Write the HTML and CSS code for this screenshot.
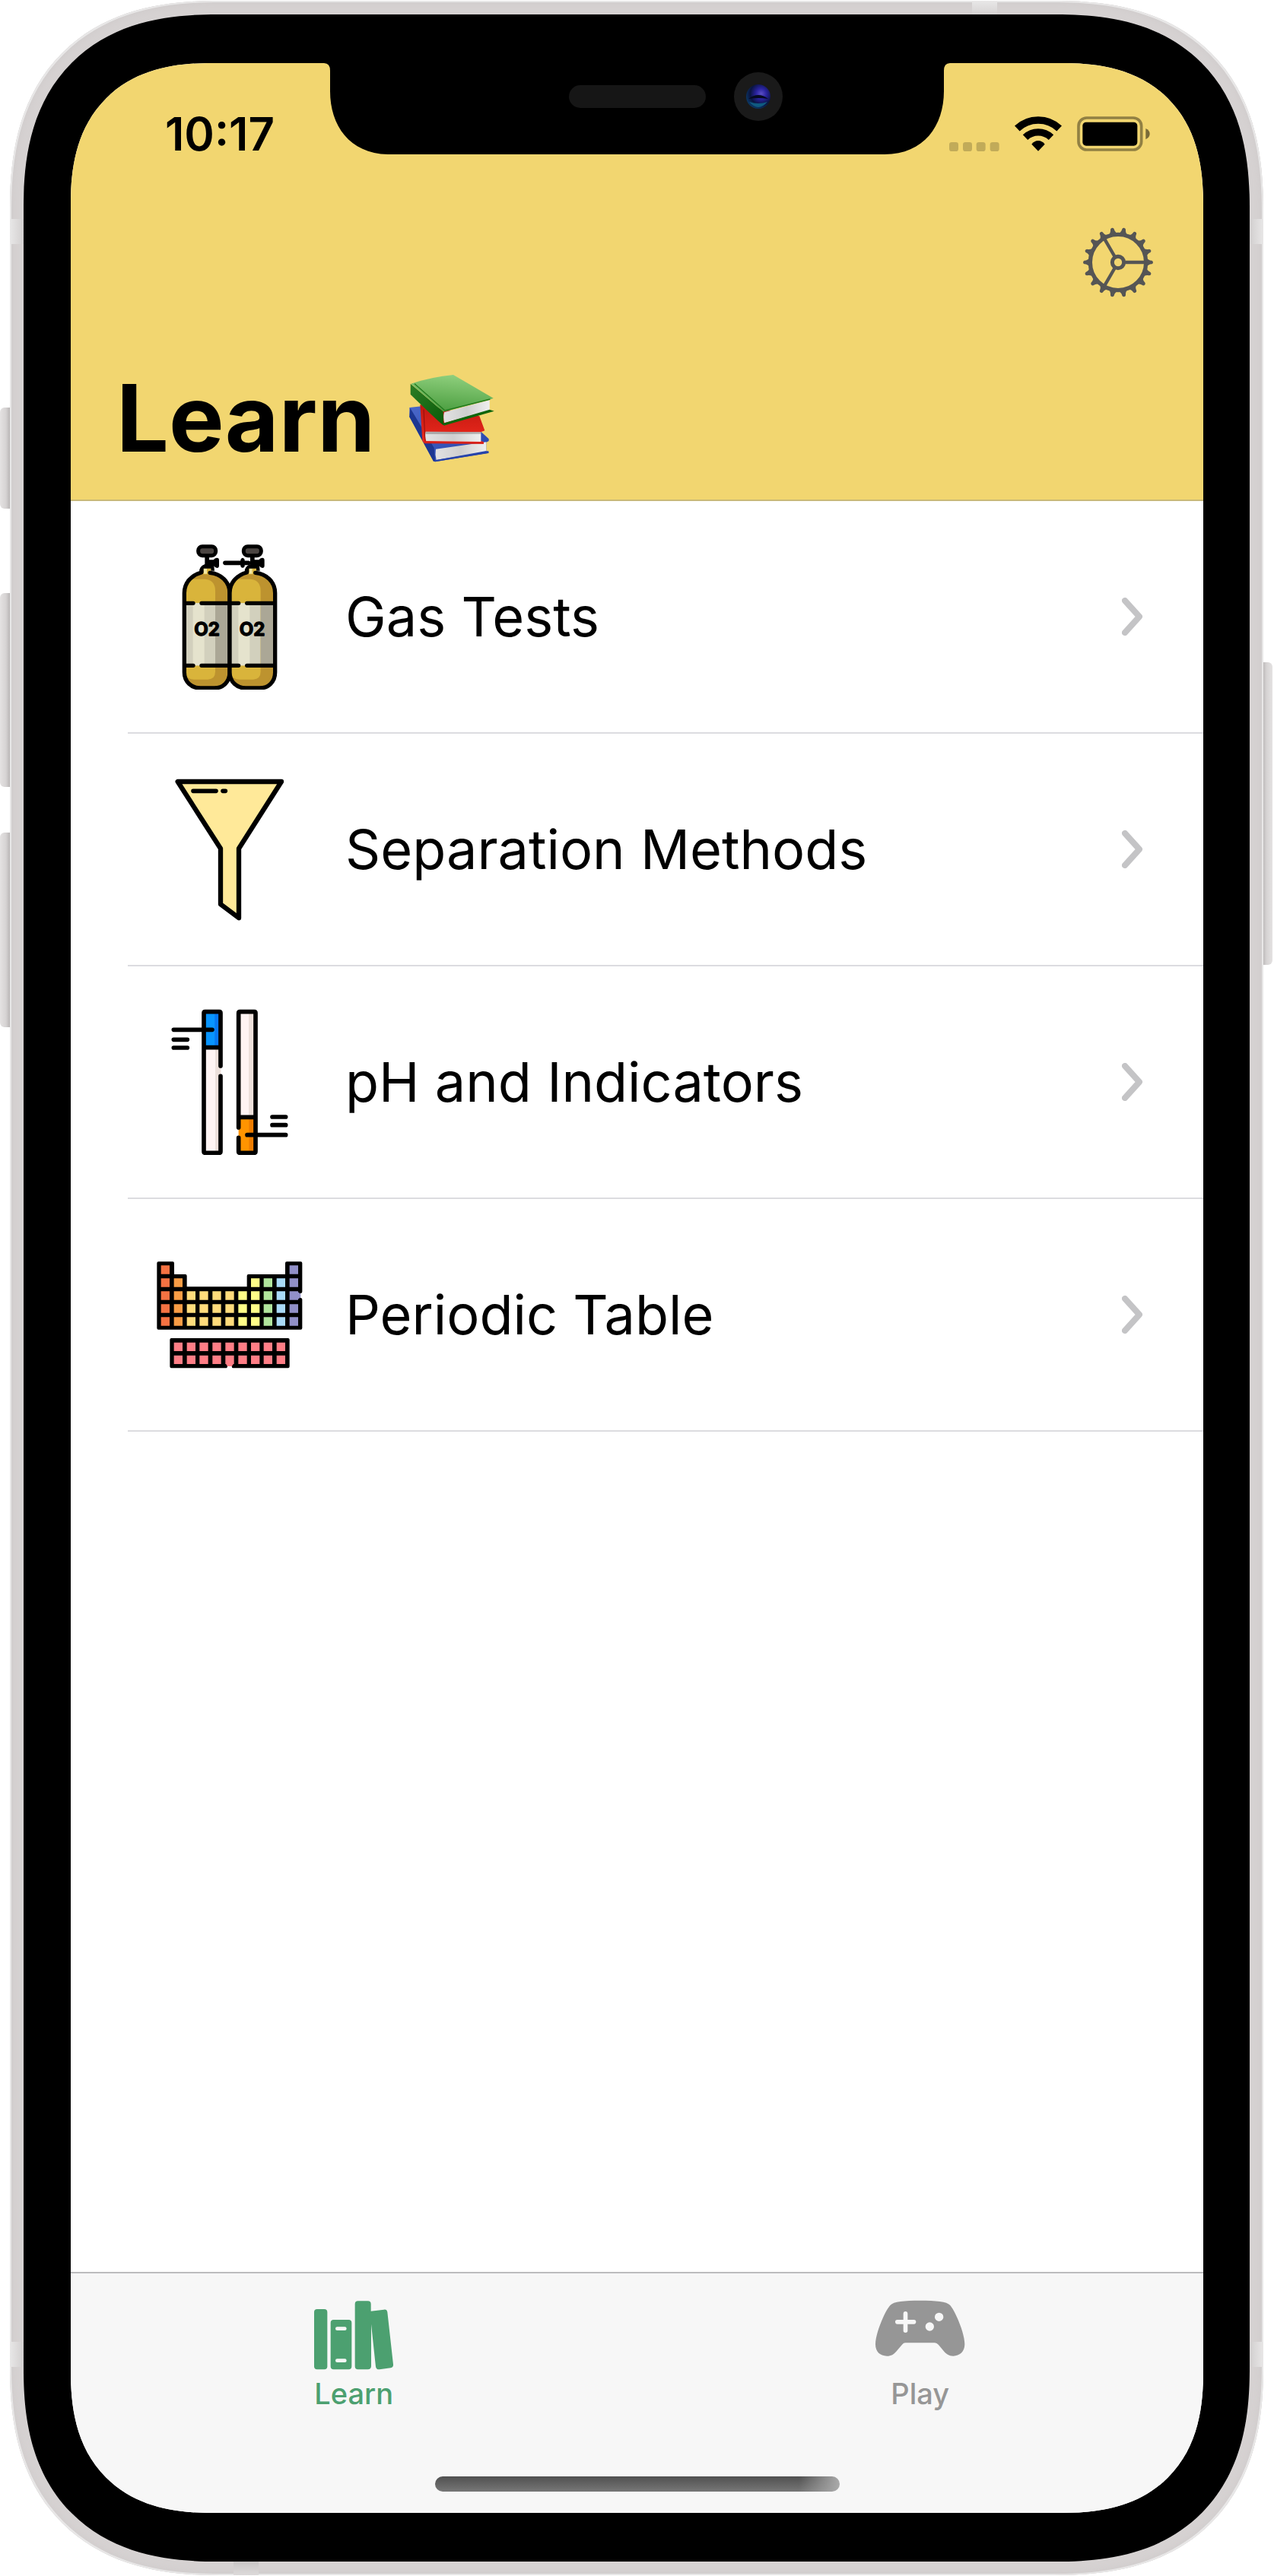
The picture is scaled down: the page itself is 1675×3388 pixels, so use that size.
FILE: index.html
```html
<!DOCTYPE html>
<html lang="en">
<head>
<meta charset="utf-8">
<meta name="viewport" content="width=device-width, initial-scale=1">
<title>Learn</title>
<link rel="stylesheet" href="styles.css">
</head>
<body>
<div class="phone">
  <span class="key key-mute"></span>
  <span class="key key-up"></span>
  <span class="key key-down"></span>
  <span class="key key-power"></span>
  <div class="frame">
    <span class="band band-side band-left band-high"></span>
    <span class="band band-side band-left band-low"></span>
    <span class="band band-side band-right band-high"></span>
    <span class="band band-side band-right band-low"></span>
    <span class="band band-edge band-top"></span>
    <span class="band band-edge band-bottom"></span>
    <div class="bezel">
      <div class="screen">
        <svg class="notch" viewBox="426 83 823 120" aria-hidden="true">
          <defs>
            <radialGradient id="lens" cx="62%" cy="38%" r="70%">
              <stop offset="0" stop-color="#5a4fc4"/>
              <stop offset=".3" stop-color="#2a23a0"/>
              <stop offset=".65" stop-color="#0a1440"/>
              <stop offset="1" stop-color="#0b3f6c"/>
            </radialGradient>
          </defs>
          <path d="M426 82H1249V83Q1241 83 1241 93V120C1241 165 1215 203 1163 203H512C460 203 434 165 434 120V93Q434 83 426 83Z"/>
          <rect x="748" y="112" width="180" height="30" rx="15" fill="#161616"/>
          <circle cx="997" cy="127" r="32" fill="#1a1a1a"/>
          <circle cx="997" cy="127" r="16" fill="url(#lens)"/>
          <path d="M984 130Q997 120 1010 130Q997 128 984 130Z" fill="#050a20"/>
          <path d="M985 134Q997 148 1009 134Q997 138 985 134Z" fill="#0f5a80"/>
        </svg>

        <header class="header">
          <div class="status">
            <time class="clock">10:17</time>
            <div class="indicators">
              <svg class="signal" viewBox="81 135 198 36" aria-label="No signal">
                <g opacity=".2"><rect x="81" y="135" width="36" height="36" rx="10"/><rect x="135" y="135" width="36" height="36" rx="10"/><rect x="188" y="135" width="36" height="36" rx="10"/><rect x="242" y="135" width="36" height="36" rx="10"/></g>
              </svg>
              <svg class="wifi" viewBox="340 33 186 138" aria-label="Wi-Fi">
                <g fill="none" stroke="#000"><path stroke-width="29" d="M350 81A121 121 0 0 1 516 81"/><path stroke-width="28" d="M382 116A74 74 0 0 1 484 116"/></g>
                <path d="M433 170L407 143Q418 129 433 129T459 143Z"/>
              </svg>
              <svg class="battery" viewBox="590 36 288 138" aria-label="Battery full">
                <rect x="596" y="42" width="248" height="126" rx="32" fill="none" stroke="#000" stroke-width="11" opacity=".4"/>
                <rect x="612" y="59" width="216" height="93" rx="14"/>
                <path d="M861 84Q877 91 877 105T861 127Z" opacity=".5"/>
              </svg>
            </div>
          </div>
          <div class="navbar">
            <button class="settings" type="button" aria-label="Settings">
              <svg viewBox="612 477 276 276" fill="none" stroke="#555">
                <defs><path id="teeth" fill="#555" stroke="none" d="M862 596Q869 607 883 608Q888 610 888 615T883 622Q869 623 862 634ZM638 596Q631 607 617 608Q612 610 612 615T617 622Q631 623 638 634Z"/></defs>
                <circle cx="750" cy="615" r="110" stroke-width="16"/>
                <circle cx="750" cy="615" r="23" stroke-width="15"/>
                <path stroke-width="13" d="M778 615H860M736 591L695 520M736 639L695 710"/>
                <use href="#teeth"/>
                <use href="#teeth" transform="rotate(20 750 615)"/>
                <use href="#teeth" transform="rotate(40 750 615)"/>
                <use href="#teeth" transform="rotate(60 750 615)"/>
                <use href="#teeth" transform="rotate(80 750 615)"/>
                <use href="#teeth" transform="rotate(100 750 615)"/>
                <use href="#teeth" transform="rotate(120 750 615)"/>
                <use href="#teeth" transform="rotate(140 750 615)"/>
                <use href="#teeth" transform="rotate(160 750 615)"/>
              </svg>
            </button>
          </div>
          <h1 class="title">Learn
            <svg class="books" viewBox="108 92 342 351" role="img" aria-label="Books">
              <defs>
                <linearGradient id="green" x1=".6" y1="0" x2=".4" y2="1"><stop offset="0" stop-color="#90d07e"/><stop offset="1" stop-color="#4b9e40"/></linearGradient>
                <linearGradient id="spine" x1="0" y1="0" x2="1" y2="1"><stop offset="0" stop-color="#2c7d25"/><stop offset="1" stop-color="#0a5a08"/></linearGradient>
                <linearGradient id="red" x1="0" y1="0" x2="0" y2="1"><stop offset="0" stop-color="#c01810"/><stop offset="1" stop-color="#ee2a1e"/></linearGradient>
                <linearGradient id="pages" x1="0" y1="0" x2="1" y2="0"><stop offset="0" stop-color="#e2e2e2"/><stop offset=".5" stop-color="#cfcfcf"/><stop offset="1" stop-color="#efefef"/></linearGradient>
                <linearGradient id="blue" x1="0" y1="0" x2="1" y2="1"><stop offset="0" stop-color="#4a67c8"/><stop offset="1" stop-color="#2444ab"/></linearGradient>
              </defs>
              <path fill="url(#blue)" d="M112 224L160 219L395 320L425 348V356L415 361V396L424 396V404L214 438L207 436L112 261Z"/>
              <path fill="url(#pages)" d="M216 388L415 360V395L218 431Q212 410 216 388Z"/>
              <path fill="#1d3791" d="M112 261L207 436L213 434L209 383L115 226Z"/>
              <path fill="none" stroke="#2743a8" stroke-width="6" d="M212 435L424 400"/>
              <path fill="url(#red)" d="M154 212L388 258L409 315L393 321V355L405 360V367L170 364L163 355Z"/>
              <path fill="url(#pages)" d="M176 319L394 321V359L178 356Q171 338 176 319Z"/>
              <path fill="#777" opacity=".5" d="M176 319L394 321V328L176 329Z"/>
              <path fill="none" stroke="#8f0f0b" stroke-width="3" d="M168 232L174 358"/>
              <path fill="none" stroke="#d3211a" stroke-width="7" d="M170 362L404 364"/>
              <path fill="url(#spine)" d="M116 130L245 240L247 294Q240 293 116 172Z"/>
              <path fill="url(#green)" d="M118 130Q200 103 285 95L443 187L425 194L252 240L245 240Z"/>
              <path fill="url(#pages)" d="M249 243L428 195V235L250 285Q244 263 249 243Z"/>
              <path fill="#0d650b" d="M428 232L446 238L248 295L245 286Z"/>
              <path fill="none" stroke="#237a1d" stroke-width="4" d="M132 130L252 236L430 191"/>
            </svg>
          </h1>
        </header>

        <main class="content">
          <ul class="topics">
            <li><a class="topic" href="#gas-tests">
              <svg class="topic-icon" viewBox="78 75 576 576" aria-hidden="true">
                <defs>
                  <clipPath id="tankclip"><path d="M187 270C187 220 220 195 250 188H300C330 195 366 220 366 270V583Q360 645 300 645H245Q190 640 187 583Z"/></clipPath>
                  <g id="tank">
                    <g clip-path="url(#tankclip)">
                      <path fill="#bd932f" d="M180 170H370V650H180Z"/>
                      <path fill="#d9b43b" d="M180 215H270Q309 220 309 262V580Q309 610 280 611H225Q195 610 187 585Z"/>
                      <path fill="#d2d0bd" d="M187 310H309V556H187Z"/>
                      <path fill="#e5e3cd" d="M221 310H266V556H221Z"/>
                      <path fill="#aba796" d="M309 310H366V556H309Z"/>
                    </g>
                    <path fill="#d9b43b" d="M262 172H292V196H262Z"/><path fill="#f3e6a0" d="M264 174H276V194H264Z"/>
                    <rect x="242" y="86" width="69" height="36" rx="16" fill="#4b4542" stroke="#000" stroke-width="15"/>
                    <path d="M268 126H285V139H302Q308 130 316 131Q324 131 324 140V162Q324 171 316 171Q308 171 304 163L306 182H292V173H263V189L246 187Q245 165 268 156Z"/>
                    <g fill="none" stroke="#000" stroke-width="16" stroke-linecap="round">
                      <path d="M254 189C220 198 187 225 187 270V583C187 620 215 645 250 645H305C340 645 366 620 366 583V270C366 225 330 193 288 190"/>
                      <path d="M190 310H222M255 310H364M190 556H222M255 556H364"/>
                    </g>
                    <text x="276" y="438" text-anchor="middle" class="tank-label">O2</text>
                  </g>
                </defs>
                <use href="#tank"/>
                <use href="#tank" x="179"/>
                <path d="M348 151H440" stroke="#000" stroke-width="17" stroke-linecap="round"/>
                <path d="M409 138Q417 125 425 138V164Q417 177 409 164Z"/>
              </svg>
              <span class="topic-name">Gas Tests</span>
              <svg class="chevron" viewBox="0 0 28 50" aria-hidden="true"><path d="M4 4L23 25L4 46"/></svg>
            </a></li>
            <li><a class="topic" href="#separation-methods">
              <svg class="topic-icon" viewBox="78 63 576 576" aria-hidden="true">
                <path d="M161 84H570L402 348V622L330 568V348Z" fill="#ffe999" stroke="#000" stroke-width="19" stroke-linejoin="round"/>
                <path fill="none" stroke="#000" stroke-width="17" stroke-linecap="round" d="M222 121H312M339 121H349"/>
              </svg>
              <span class="topic-name">Separation Methods</span>
              <svg class="chevron" viewBox="0 0 28 50" aria-hidden="true"><path d="M4 4L23 25L4 46"/></svg>
            </a></li>
            <li><a class="topic" href="#ph-and-indicators">
              <svg class="topic-icon" viewBox="78 81 576 576" aria-hidden="true">
                <path fill="#fff4f3" d="M263 92H331V648H263ZM401 92H468V648H401Z"/>
                <path fill="#ede0db" d="M309 240H331V648H309ZM441 92H462V500H441Z"/>
                <path fill="#0895ff" d="M263 92H322V230H263Z"/><path fill="#0878f2" d="M307 92H326V230H307Z"/>
                <path fill="#ff9400" d="M401 510H462V648H401Z"/><path fill="#ee7d00" d="M442 510H462V648H442Z"/>
                <g fill="none" stroke="#000" stroke-width="17" stroke-linecap="round" stroke-linejoin="round">
                  <path d="M330 306V97Q330 92 325 92H269Q264 92 264 97V643Q264 649 269 649H325Q330 649 330 643V346M264 233H330M145 163H297M145 202H199M145 234H199"/>
                  <path d="M401 549V97Q401 92 406 92H463Q468 92 468 97V643Q468 649 463 649H406Q401 649 401 643V589M401 508H468M435 578H587M534 507H587M534 539H587"/>
                </g>
              </svg>
              <span class="topic-name">pH and Indicators</span>
              <svg class="chevron" viewBox="0 0 28 50" aria-hidden="true"><path d="M4 4L23 25L4 46"/></svg>
            </a></li>
            <li><a class="topic" href="#periodic-table">
              <svg class="topic-icon" viewBox="78 9 576 576" aria-hidden="true">
                <path d="M85 88H141Q147 88 147 94V138H191Q197 138 197 144V187H434V144Q434 138 440 138H585V94Q585 88 591 88H646Q652 88 652 94V207Q652 213 645 213V231Q652 231 652 237V350Q652 356 646 356H85Q79 356 79 350V94Q79 88 85 88Z"/>
                <path d="M136 390H596Q602 390 602 396V502Q602 508 596 508H380Q374 508 374 500H357Q357 508 350 508H136Q130 508 130 502V396Q130 390 136 390Z"/>
                <g fill="none" stroke-width="34">
                  <path stroke="#f57242" stroke-dasharray="34 17" d="M112 103V341"/>
                  <path stroke="#f99d45" stroke-dasharray="34 17" d="M163 154V341"/>
                  <path stroke="#ffdc7c" stroke-dasharray="34 17" d="M214 205V341M264 205V341M315 205V341M366 205V341"/>
                  <path stroke="#fffd88" stroke-dasharray="34 17" d="M417 205V341M467 154V341"/>
                  <path stroke="#b1e59d" stroke-dasharray="34 17" d="M517 154V341"/>
                  <path stroke="#a9daf7" stroke-dasharray="34 17" d="M568 154V341"/>
                  <path stroke="#9190c8" stroke-dasharray="34 17" d="M619 103V341"/>
                  <path stroke="#ff7e86" stroke-dasharray="34 17" d="M163 407V492M214 407V492M264 407V492M315 407V492M366 407V492M417 407V492M467 407V492M517 407V492M568 407V492"/>
                </g>
                <path fill="#9190c8" d="M634 207L646 215V229L634 237Z"/>
                <path fill="#ff7e86" d="M350 490H382L374 501H357Z"/>
              </svg>
              <span class="topic-name">Periodic Table</span>
              <svg class="chevron" viewBox="0 0 28 50" aria-hidden="true"><path d="M4 4L23 25L4 46"/></svg>
            </a></li>
          </ul>
        </main>

        <footer class="dock">
          <nav class="tabs">
            <a class="tab tab-active" href="#learn">
              <svg class="tab-icon" viewBox="88 75 318 276" fill="currentColor" aria-hidden="true">
                <rect x="91" y="111" width="52" height="238" rx="12"/>
                <path fill-rule="evenodd" d="M168 153H227Q239 153 239 165V337Q239 349 227 349H168Q156 349 156 337V165Q156 153 168 153ZM182 181Q175 181 175 188T182 195H212Q219 195 219 188T212 181ZM182 307Q175 307 175 314T182 321H212Q219 321 219 314T212 307Z"/>
                <path d="M264 79H303Q315 79 315 91V119L366 113Q378 111 380 123L403 329Q404 341 393 343L349 349Q336 350 334 338L316 170V337Q315 349 303 349H264Q252 349 252 337V91Q252 79 264 79Z"/>
              </svg>
              <span>Learn</span>
            </a>
            <a class="tab" href="#play">
              <svg class="tab-icon" viewBox="88 75 358 276" fill="currentColor" aria-hidden="true">
                <path fill-rule="evenodd" d="M150 95C162 81 205 77 267 77S373 81 385 95C404 115 443 205 443 250C443 280 422 296 398 296C380 296 370 288 360 276L340 252Q333 244 325 244H209Q202 244 196 251L173 278C163 289 154 296 136 296C110 296 91 280 91 250C91 205 130 115 150 95ZM201 129V153H177Q169 153 169 161.500T177 170H201V196Q201 204 209.500 204T218 196V170H243Q251 170 251 161.500T243 153H218V129Q218 120 209.500 120T201 129ZM288 180A17 17 0 1 0 322 180A17 17 0 1 0 288 180ZM325 142A17 17 0 1 0 359 142A17 17 0 1 0 325 142Z"/>
              </svg>
              <span>Play</span>
            </a>
          </nav>
          <span class="home-bar"></span>
        </footer>
      </div>
    </div>
  </div>
</div>
</body>
</html>
```

FILE: styles.css
```css
* { box-sizing: border-box; }

body {
  margin: 0;
  background: #fff;
  color: #000;
  font-family: Inter, "Liberation Sans", sans-serif;
}

a { color: inherit; text-decoration: none; }

/* Device shell */
.phone {
  position: relative;
  display: flex;
  min-height: 100vh;
  padding: 1px 14px 1px 13px;
}

.frame {
  position: relative;
  flex: 1;
  display: flex;
  padding: 18px;
  border-radius: 235px;
  background: #d6d2d2;
  box-shadow: inset 0 0 0 2px #e8e7e7, inset 0 0 14px #cbc7c7;
}

.bezel {
  flex: 1;
  display: flex;
  padding: 64px 61px 64px 62px;
  border-radius: 217px;
  background: #000;
}

.screen {
  position: relative;
  flex: 1;
  display: flex;
  flex-direction: column;
  overflow: hidden;
  border-radius: 159px;
  background: #fff;
}

@supports (corner-shape: superellipse(1.27)) {
  .frame, .bezel, .screen { corner-shape: superellipse(1.27); }
  .frame { border-radius: 275px; }
  .bezel { border-radius: 254px; }
  .screen { border-radius: 186px; }
}

.key {
  position: absolute;
  left: 0;
  width: 13px;
  border-radius: 6px 0 0 6px;
  background: linear-gradient(90deg, #e4e2e2, #d6d3d3 60%, #b9b6b6);
}
.key-mute { top: 536px; height: 133px; }
.key-up { top: 780px; height: 255px; }
.key-down { top: 1095px; height: 256px; }
.key-power {
  top: 871px;
  right: 2px;
  left: auto;
  height: 398px;
  border-radius: 0 6px 6px 0;
  background: linear-gradient(270deg, #e4e2e2, #d6d3d3 60%, #b9b6b6);
}

.band { position: absolute; }
.band-side { width: 18px; height: 33px; background: linear-gradient(90deg, #e8e7e7, #d2cfcf); }
.band-edge { width: 33px; height: 18px; background: linear-gradient(#e8e7e7, #d6d3d3); }
.band-left { left: 0; }
.band-right { right: 0; background: linear-gradient(270deg, #e8e7e7, #d2cfcf); }
.band-high { top: 287px; }
.band-low { bottom: 274px; }
.band-top { top: 0; right: 350px; }
.band-bottom { bottom: 0; left: 294px; background: linear-gradient(#c9c6c6, #dddada); }

.notch {
  position: absolute;
  top: 0;
  right: 0;
  left: 0;
  width: 823px;
  height: 120px;
  margin: 0 auto;
}

/* Header */
.header {
  padding-bottom: 32px;
  border-bottom: 2px solid #c9b978;
  background: #f2d670;
}

.status {
  display: flex;
  align-items: center;
  justify-content: space-between;
  height: 186px;
  padding: 0 70px 0 124px;
}
.clock { font-size: 60px; font-weight: 600; line-height: 72px; }
.indicators { display: flex; align-items: flex-end; gap: 20px; }
.signal { width: 66px; height: 12px; }
.wifi { width: 62px; height: 46px; }
.battery { width: 96px; height: 46px; }

.navbar {
  display: flex;
  align-items: center;
  justify-content: flex-end;
  height: 152px;
  padding-right: 66px;
}
.settings { padding: 0; border: 0; background: none; }
.settings svg { display: block; width: 92px; height: 92px; }

.title {
  display: flex;
  align-items: center;
  gap: 44px;
  margin: 54px 0 0;
  padding-left: 60px;
  font-size: 122px;
  font-weight: 700;
  line-height: 150px;
}
.books { width: 114px; height: 117px; }

/* Topic list */
.content { flex: 1; }
.topics { margin: 0; padding: 0 0 0 75px; list-style: none; }
.topic {
  display: flex;
  align-items: center;
  height: 306px;
  padding: 0 79px 0 38px;
  border-bottom: 2px solid #dcdce0;
}
.topic-icon { width: 192px; height: 192px; }
.tank-label { font-size: 72px; font-weight: 700; stroke: #000; stroke-width: 4px; stroke-linejoin: round; }
.topic-name { flex: 1; padding-left: 56px; font-size: 72px; line-height: 96px; }
.chevron { width: 28px; height: 50px; fill: none; stroke: #c4c4c6; stroke-width: 8px; stroke-linecap: round; stroke-linejoin: round; }

/* Tab bar */
.dock {
  display: flex;
  flex-direction: column;
  align-items: center;
  height: 317px;
  padding: 35px 0 28px;
  border-top: 2px solid #bcbcbe;
  background: #f7f7f7;
}
.tabs { display: flex; align-self: stretch; flex: 1; }
.tab {
  flex: 1;
  display: flex;
  flex-direction: column;
  align-items: center;
  gap: 7px;
  color: #969696;
  font-size: 38px;
  font-weight: 500;
  line-height: 48px;
}
.tab-active { color: #4ca070; }
.tab-icon { height: 92px; }
.home-bar {
  width: 532px;
  height: 20px;
  border-radius: 10px;
  background: linear-gradient(90deg, transparent 90%, #aaa), linear-gradient(#505050, #777);
}
```
